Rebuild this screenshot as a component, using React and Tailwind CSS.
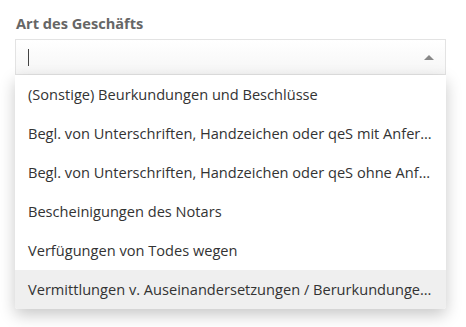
const options = [
  "(Sonstige) Beurkundungen und Beschlüsse",
  "Begl. von Unterschriften, Handzeichen oder qeS mit Anfer…",
  "Begl. von Unterschriften, Handzeichen oder qeS ohne Anf…",
  "Bescheinigungen des Notars",
  "Verfügungen von Todes wegen",
  "Vermittlungen v. Auseinandersetzungen / Berurkundunge…",
];

export default function App() {
  const active = 5;

  return (
    <div
      className="w-[466px] h-[327px] bg-white px-[15px] pt-[13px]"
      style={{ fontFamily: '"Open Sans", sans-serif' }}
    >
      {/* Label */}
      <div className="text-[14.6px] leading-[20px] font-bold text-[#666] pl-[1px] mb-[6px]">
        Art des Geschäfts
      </div>

      {/* Select input */}
      <div className="w-[431px] h-[36px] border border-[#e3e3e3] bg-gradient-to-b from-white to-[#f6f6f6] flex items-center pl-[12px] pr-[11px]">
        <div className="w-[1px] h-[17px] bg-[#444]" />
        <div className="flex-1" />
        <svg width="10" height="5" viewBox="0 0 10 5">
          <path d="M0 5 L5 0 L10 5 Z" fill="#888" />
        </svg>
      </div>

      {/* Dropdown */}
      <div className="w-[431px] bg-white rounded-b-[3px] shadow-[0_6px_16px_rgba(0,0,0,0.22)] overflow-hidden">
        {options.map((opt, i) => (
          <div
            key={opt}
            className={
              i === active
                ? "h-[39px] flex items-center pl-[13px] pr-[8px] bg-[#efefef] text-[14.6px] text-[#333] whitespace-nowrap"
                : "h-[39px] flex items-center pl-[13px] pr-[8px] text-[14.6px] text-[#333] whitespace-nowrap"
            }
          >
            {opt}
          </div>
        ))}
      </div>
    </div>
  );
}
